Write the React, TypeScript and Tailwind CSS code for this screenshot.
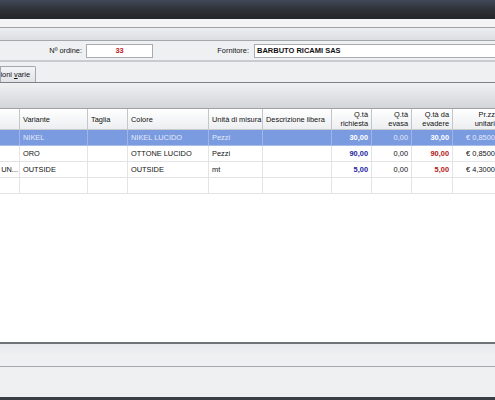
import React from 'react';

type Col = { key: string; label: string[]; w: string; right?: boolean };

const columns: Col[] = [
  { key: 'art', label: [''], w: 'w-[20px]' },
  { key: 'variante', label: ['Variante'], w: 'w-[68px]' },
  { key: 'taglia', label: ['Taglia'], w: 'w-[40px]' },
  { key: 'colore', label: ['Colore'], w: 'w-[81px]' },
  { key: 'um', label: ['Unità di misura'], w: 'w-[54px]' },
  { key: 'descr', label: ['Descrizione libera'], w: 'w-[69px]' },
  { key: 'rich', label: ['Q.tà', 'richiesta'], w: 'w-[40px]', right: true },
  { key: 'evasa', label: ['Q.tà', 'evasa'], w: 'w-[40px]', right: true },
  { key: 'daev', label: ['Q.tà da', 'evadere'], w: 'w-[41px]', right: true },
  { key: 'prezzo', label: ['Pr.zzo', 'unitario'], w: 'w-[50px]', right: true },
];

type Row = Record<string, string>;

const rows: Row[] = [
  { art: '', variante: 'NIKEL', taglia: '', colore: 'NIKEL LUCIDO', um: 'Pezzi', descr: '', rich: '30,00', evasa: '0,00', daev: '30,00', prezzo: '€ 0,85000' },
  { art: '', variante: 'ORO', taglia: '', colore: 'OTTONE LUCIDO', um: 'Pezzi', descr: '', rich: '90,00', evasa: '0,00', daev: '90,00', prezzo: '€ 0,85000' },
  { art: 'UN...', variante: 'OUTSIDE', taglia: '', colore: 'OUTSIDE', um: 'mt', descr: '', rich: '5,00', evasa: '0,00', daev: '5,00', prezzo: '€ 4,30000' },
  { art: '', variante: '', taglia: '', colore: '', um: '', descr: '', rich: '', evasa: '', daev: '', prezzo: '' },
];

function cellColor(key: string, selected: boolean) {
  if (selected) {
    if (key === 'rich' || key === 'daev') return 'font-bold text-white';
    return 'text-[#e4eafa]';
  }
  if (key === 'rich') return 'font-bold text-[#1c1ca0]';
  if (key === 'daev') return 'font-bold text-[#b41414]';
  return 'text-[#111]';
}

export default function App() {
  return (
    <div className="w-[495px] h-[400px] overflow-hidden flex flex-col bg-[#eff0f2] text-[7.4px] text-[#111] font-['Liberation_Sans',Arial,sans-serif]">
      {/* window title bar */}
      <div className="h-[19px] shrink-0 bg-gradient-to-b from-[#414858] via-[#2f3239] to-[#242528]" />
      <div className="h-[9px] shrink-0 bg-[#f4f4f6] border-b border-[#9ea1a6]" />
      <div className="h-[13px] shrink-0 bg-gradient-to-b from-[#eceef1] to-[#dcdee2] border-b border-[#a3a6ab]" />

      {/* header form */}
      <div className="h-[21px] shrink-0 flex items-center border-b-2 border-[#cacbce] whitespace-nowrap">
        <span className="w-[82px] shrink-0 text-right">Nº ordine:</span>
        <div className="ml-[4px] w-[67px] shrink-0 h-[14px] bg-white border border-[#a9abae] flex items-center justify-center font-bold text-[#c0181c]">
          33
        </div>
        <span className="w-[96px] shrink-0 text-right">Fornitore:</span>
        <div className="ml-[5px] w-[260px] shrink-0 h-[14px] bg-white border border-[#a9abae] flex items-center pl-[2px] font-bold text-[7.5px]">
          BARBUTO RICAMI SAS
        </div>
      </div>

      {/* tabs */}
      <div className="h-[21px] shrink-0 flex items-end border-b border-[#7d8086]">
        <div className="w-[36px] h-[16px] shrink-0 overflow-hidden flex items-center justify-end pr-[5px] border border-b-0 border-[#a4a7ac] rounded-tr-[2px] bg-gradient-to-b from-[#f3f4f6] to-[#e1e3e6] whitespace-nowrap">
          <span>
            Informazioni <span className="underline">v</span>arie
          </span>
        </div>
      </div>

      {/* toolbar */}
      <div className="h-[26px] shrink-0 bg-gradient-to-b from-[#f0f1f3] to-[#d3d5d9] border-b border-[#9fa2a7]" />

      {/* grid */}
      <div className="h-[233px] shrink-0 bg-white overflow-hidden">
        <div className="flex h-[21px] border-b border-[#c9cbce] bg-gradient-to-b from-white to-[#eceef0] whitespace-nowrap">
          {columns.map((c) => (
            <div
              key={c.key}
              className={`${c.w} shrink-0 flex flex-col justify-center leading-[9px] px-[3px] border-r border-[#c4c6c9] ${c.right ? 'items-end text-right' : 'items-start'}`}
            >
              {c.label.map((l) => (
                <span key={l}>{l}</span>
              ))}
            </div>
          ))}
        </div>
        {rows.map((r, i) => {
          const selected = i === 0;
          return (
            <div
              key={i}
              className={`flex h-[16px] border-b whitespace-nowrap ${selected ? 'bg-[#7b9be1] border-[#a9bdeb]' : 'bg-white border-[#e3e4e6]'}`}
            >
              {columns.map((c) => (
                <div
                  key={c.key}
                  className={`${c.w} shrink-0 flex items-center overflow-hidden border-r ${c.key === 'art' ? 'px-[1px]' : 'px-[3px]'} ${selected ? 'border-[#9fb5e8]' : 'border-[#e3e4e6]'} ${c.right || c.key === 'art' ? 'justify-end' : 'justify-start'} ${cellColor(c.key, selected)}`}
                >
                  {r[c.key]}
                </div>
              ))}
            </div>
          );
        })}
      </div>

      {/* status area */}
      <div className="h-[25px] shrink-0 border-t-2 border-t-[#6f7277] bg-gradient-to-b from-[#e6e8eb] via-[#eff0f2] to-[#eff0f2] border-b border-b-[#a6a8ac]" />
      <div className="h-[30px] shrink-0 bg-[#eff0f2]" />
      <div className="flex-1 bg-[#3b3e44]" />
    </div>
  );
}
